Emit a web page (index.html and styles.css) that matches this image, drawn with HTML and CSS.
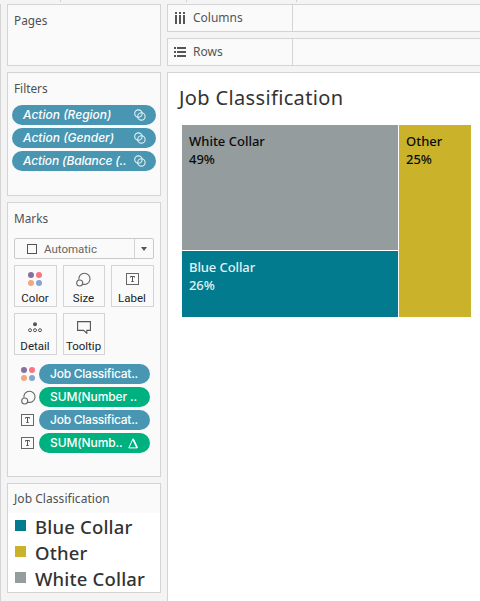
FILE: index.html
```html
<!DOCTYPE html>
<html lang="en">
<head>
<meta charset="utf-8">
<title>Job Classification</title>
<link rel="stylesheet" href="styles.css">
</head>
<body>
<svg class="defs" width="0" height="0">
  <symbol id="color" viewBox="0 0 14 14"><circle cx="3" cy="3" r="3" fill="#86709c"/><circle cx="11" cy="3" r="3" fill="#fa7583"/><circle cx="3" cy="11" r="3" fill="#f2a77f"/><circle cx="11" cy="11" r="3" fill="#83a6cd"/></symbol>
  <symbol id="size" viewBox="0 0 15 15"><g fill="none" stroke="#666" stroke-width="1.1"><path d="M2.9 7.6A5.6 5.6 0 1 1 7 12.2"/><circle cx="3.7" cy="11" r="3"/></g></symbol>
  <symbol id="label" viewBox="0 0 13 12"><rect x=".5" y=".5" width="12" height="11" fill="none" stroke="#666"/><path d="M4.5 4.6V3.5h4v1.1M6.5 3.5v5M5.3 8.5h2.4" fill="none" stroke="#555"/></symbol>
  <symbol id="detail" viewBox="0 0 14 11"><circle cx="7" cy="2.2" r="2" fill="#555"/><g fill="none" stroke="#555"><circle cx="2" cy="8.2" r="1.5"/><circle cx="7" cy="8.2" r="1.5"/><circle cx="12" cy="8.2" r="1.5"/></g></symbol>
  <symbol id="tooltip" viewBox="0 0 14 13"><path d="M.6.6h12.8v8.8h-3.6v2.9L6.6 9.4H.6z" fill="none" stroke="#555" stroke-width="1.1"/></symbol>
  <symbol id="link" viewBox="0 0 12 12"><g fill="none" stroke="#e4f0f4" stroke-width="1.1"><circle cx="4.4" cy="4.6" r="3.7"/><circle cx="7.4" cy="7.4" r="3.7"/></g></symbol>
  <symbol id="delta" viewBox="0 0 10 11"><path d="M5 .8 9.2 9.9H.8z" fill="none" stroke="#fff"/><path d="M5 .8 9.2 9.9" stroke="#fff" stroke-width="1.6"/></symbol>
</svg>
<div class="toolbar"><i class="tick"></i><i class="tick"></i><i class="tick"></i></div>
<div class="app">
  <aside class="side">
    <section class="card pages"><h2>Pages</h2></section>
    <section class="card filters">
      <h2>Filters</h2>
      <div class="filter-list">
        <div class="pill filter"><span>Action (Region)</span><svg class="link"><use href="#link"/></svg></div>
        <div class="pill filter"><span>Action (Gender)</span><svg class="link"><use href="#link"/></svg></div>
        <div class="pill filter"><span class="balance">Action (Balance (..</span><svg class="link"><use href="#link"/></svg></div>
      </div>
    </section>
    <section class="card marks">
      <h2>Marks</h2>
      <div class="select"><i class="square"></i><span>Automatic</span><b class="drop"><i class="caret"></i></b></div>
      <div class="buttons">
        <div class="btn"><svg width="14" height="14"><use href="#color"/></svg><span>Color</span></div>
        <div class="btn"><svg width="15" height="15"><use href="#size"/></svg><span>Size</span></div>
        <div class="btn"><svg width="13" height="12"><use href="#label"/></svg><span>Label</span></div>
        <div class="btn"><svg width="14" height="11"><use href="#detail"/></svg><span>Detail</span></div>
        <div class="btn"><svg width="14" height="13"><use href="#tooltip"/></svg><span>Tooltip</span></div>
      </div>
      <div class="encodings">
        <div class="enc"><svg width="14" height="14"><use href="#color"/></svg><div class="pill blue"><span class="job">Job Classificat..</span></div></div>
        <div class="enc"><svg width="15" height="15"><use href="#size"/></svg><div class="pill green"><span class="sum">SUM(Number ..</span></div></div>
        <div class="enc"><svg width="13" height="12"><use href="#label"/></svg><div class="pill blue"><span class="job">Job Classificat..</span></div></div>
        <div class="enc"><svg width="13" height="12"><use href="#label"/></svg><div class="pill green"><span class="sum">SUM(Numb..</span><svg class="delta"><use href="#delta"/></svg></div></div>
      </div>
    </section>
    <section class="card legend">
      <h3>Job Classification</h3>
      <ul>
        <li><i class="teal"></i>Blue Collar</li>
        <li><i class="gold"></i>Other</li>
        <li><i class="gray"></i>White Collar</li>
      </ul>
    </section>
  </aside>
  <main class="main">
    <div class="shelf"><div class="shelf-name"><svg width="12" height="12"><path d="M1 0h2v2H1zM1 3h2v9H1zM5 0h2v2H5zM5 3h2v9H5zM9 0h2v2H9zM9 3h2v9H9z" fill="#555"/></svg><span>Columns</span></div></div>
    <div class="shelf"><div class="shelf-name"><svg width="12" height="12"><path d="M0 1h2v2H0zM3 1h9v2H3zM0 5h2v2H0zM3 5h9v2H3zM0 9h2v2H0zM3 9h9v2H3z" fill="#555"/></svg><span>Rows</span></div></div>
    <section class="view">
      <h1>Job Classification</h1>
      <div class="treemap">
        <div class="cell gray">White Collar<br>49%</div>
        <div class="cell gold other">Other<br>25%</div>
        <div class="cell teal">Blue Collar<br>26%</div>
      </div>
    </section>
  </main>
</div>
</body>
</html>
```

FILE: styles.css
```css
* { box-sizing: border-box; }
body { margin: 0; width: 480px; height: 601px; overflow: hidden; background: #f4f4f4; color: #505050; font: 12px/16px "Noto Sans", sans-serif; display: flex; flex-direction: column; }
h1, h2, h3, ul { margin: 0; padding: 0; font-weight: 400; }
svg { display: block; flex: none; }
.defs { position: absolute; }
.toolbar { height: 4px; display: flex; padding-left: 60px; }
.tick { width: 1px; height: 2px; background: #d4d4d4; margin-right: 125px; }
.tick + .tick { margin-right: 109px; }
.app { flex: 1; display: flex; min-height: 0; }
.side { width: 167px; border-left: 1px solid #d4d4d4; padding: 0 6px; display: flex; flex-direction: column; gap: 6px; }
.card { width: 154px; border: 1px solid #d4d4d4; background: #fafafa; flex: none; }
.card h2 { font-size: 11.8px; line-height: 16px; padding: 7px 0 0 6px; }
.pages { height: 62px; }
.filters { height: 124px; }
.marks { height: 275px; }
.legend { height: 110px; background: #fff; }
.filter-list { margin: 9px 4px 0; display: flex; flex-direction: column; gap: 3px; }
.pill { height: 20px; border-radius: 10px; background: #4996b2; color: #fff; font: 500 12px/20px Inter, sans-serif; display: flex; align-items: center; white-space: nowrap; padding-bottom: 1px; }
.filter { padding: 0 10px 1px 11px; font-style: italic; justify-content: space-between; }
.balance { letter-spacing: -.15px; }
.link { width: 12px; height: 12px; margin-top: 1px; }
.select { margin: 12px 6px 0; height: 21px; border: 1px solid #c9c9c9; border-radius: 2px; display: flex; align-items: center; font: 11.5px/18px Roboto, sans-serif; color: #666; padding-left: 12px; }
.square { width: 10px; height: 10px; border: 1px solid #555; margin-right: 7px; }
.drop { margin-left: auto; width: 19px; height: 19px; border-left: 1px solid #d4d4d4; display: grid; place-items: center; }
.caret { border: 3.5px solid transparent; border-top: 4px solid #555; border-bottom: 0; }
.buttons { display: grid; grid-template-columns: 43px 42px 43px; grid-auto-rows: 42px; gap: 6px; margin: 6px 0 0 6px; }
.btn { border: 1px solid #d4d4d4; display: grid; grid-template-rows: 26px 12px; justify-items: center; align-items: center; color: #222; font: 11.5px/12px Roboto, sans-serif; padding-right: 1px; }
.encodings { margin: 9px 10px 0 13px; display: flex; flex-direction: column; gap: 3px; }
.enc { display: grid; grid-template-columns: 14px 111px; column-gap: 4px; align-items: center; }
.enc .pill { padding-left: 11px; }
.job { letter-spacing: -.25px; }
.sum { letter-spacing: -.12px; }
.blue { background: #4996b2; }
.green { background: #00b180; }
.delta { width: 10px; height: 11px; margin: 1px 0 0 5px; }
.legend h3 { height: 29px; line-height: 29px; background: #fafafa; font-size: 12px; padding-left: 6px; letter-spacing: .05px; }
.legend ul { list-style: none; }
.legend li { height: 26px; display: flex; align-items: center; gap: 9px; padding: 2px 0 0 7px; font: 500 18.5px/24px "Noto Sans", sans-serif; letter-spacing: .18px; color: #333; white-space: nowrap; }
.legend li i { width: 11px; height: 11px; margin-top: -3px; }
.teal { background: #037b8e; }
.gold { background: #cab22b; }
.gray { background: #949c9e; }
.main { flex: 1; display: flex; flex-direction: column; gap: 6px; min-width: 0; }
.shelf { height: 28px; border: 1px solid #d4d4d4; border-right: 0; background: #fafafa; }
.shelf-name { width: 125px; height: 26px; border-right: 1px solid #d4d4d4; display: flex; align-items: center; gap: 7px; padding-left: 6px; color: #555; }
.view { flex: 1; border: 1px solid #d4d4d4; border-width: 1px 0 0 1px; background: #fff; padding: 11px 0 0 11px; }
.view h1 { font-size: 20px; font-weight: 450; line-height: 28px; letter-spacing: .35px; color: #333; white-space: nowrap; }
.treemap { margin: 13px 0 0 3px; width: 289px; height: 192px; display: grid; grid-template: 125px 66px / 216px 72px; gap: 1px; }
.cell { padding: 7px; font: 500 13px/18px "Noto Sans", sans-serif; color: #0b0b0b; white-space: nowrap; }
.cell.teal { color: #e4f2f4; letter-spacing: -.1px; }
.other { grid-column: 2; grid-row: 1 / 3; }
```
